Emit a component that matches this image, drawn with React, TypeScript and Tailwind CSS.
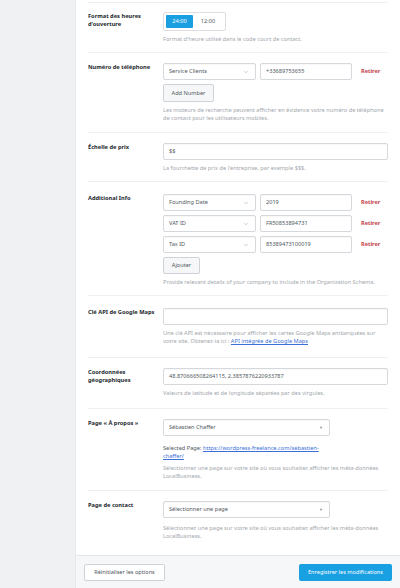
import { ChevronDown } from 'lucide-react';

const font = "font-['Noto_Sans',sans-serif]";
const labelCls = 'w-[75px] shrink-0 text-[5.7px] font-bold leading-[8px] text-[#23282d]';
const helpCls = 'text-[5.65px] leading-[8px] text-[#a2a7ad]';
const inputCls =
  'h-[17px] border border-[#d5d8dc] rounded-[2px] bg-white px-[5px] flex items-center text-[5.6px] text-[#50575e] whitespace-nowrap shadow-[inset_0_1px_1px_rgba(0,0,0,0.03)]';
const btnCls =
  'border border-[#cfd3d7] rounded-[2px] bg-[#f6f7f8] flex items-center justify-center text-[5.6px] text-[#50575e] whitespace-nowrap';

function Select({ value, width }: { value: string; width: string }) {
  return (
    <div className={`${inputCls} ${width} justify-between`}>
      <span>{value}</span>
      <ChevronDown size={6} strokeWidth={2} className="text-[#9aa0a6] mr-[1px]" />
    </div>
  );
}

function PageSelect({ value }: { value: string }) {
  return (
    <div className={`${inputCls} w-[167px] justify-between text-[#3c434a]`}>
      <span>{value}</span>
      <span className="text-[4px] text-[#8c9196] mr-[1px]">▼</span>
    </div>
  );
}

function Row({ label, children, pt = 'pt-[10px]', pb = 'pb-[10px]' }: { label: React.ReactNode; children: React.ReactNode; pt?: string; pb?: string }) {
  return (
    <div className={`flex border-t border-[#eef0f2] ${pt} ${pb}`}>
      <div className={labelCls}>{label}</div>
      <div className="flex-1 flex flex-col">{children}</div>
    </div>
  );
}

function PairRow({ kind, value }: { kind: string; value: string }) {
  return (
    <div className="flex items-center">
      <Select value={kind} width="w-[93px]" />
      <div className={`${inputCls} w-[92px] ml-[4px]`}>{value}</div>
      <span className="ml-[9px] text-[5.6px] font-bold text-[#c4434a]">Retirer</span>
    </div>
  );
}

export default function App() {
  return (
    <div className={`${font} flex w-[400px] h-[588px] overflow-hidden bg-[#f0f1f3]`}>
      <div className="w-[75px] shrink-0 bg-[#f0f1f3]" />
      <div className="flex-1 flex flex-col bg-white border-l border-[#e6e8eb]">
        <div className="flex-1 px-[12px] pt-[2px]">
          <Row label={<>Format des heures<br />d'ouverture</>} pt="pt-[9px]" pb="pb-[9px]">
            <div className="flex w-[63px] h-[19px] border border-[#dcdfe3] rounded-[2px] p-[2px] items-stretch">
              <div className="w-[27px] bg-[#1a9fe0] rounded-[1px] text-white text-[5.6px] flex items-center justify-center">24:00</div>
              <div className="flex-1 text-[#50575e] text-[5.6px] flex items-center justify-center">12:00</div>
            </div>
            <p className={`${helpCls} mt-[4px]`}>Format d'heure utilisé dans le code court de contact.</p>
          </Row>

          <Row label="Numéro de téléphone">
            <PairRow kind="Service Clients" value="+33689753655" />
            <div className={`${btnCls} w-[51px] h-[18px] mt-[4px]`}>Add Number</div>
            <p className={`${helpCls} mt-[4px]`}>
              Les moteurs de recherche peuvent afficher en évidence votre numéro de téléphone de contact pour les utilisateurs mobiles.
            </p>
          </Row>

          <Row label="Échelle de prix" pb="pb-[9px]">
            <div className={inputCls}>$$</div>
            <p className={`${helpCls} mt-[4px]`}>La fourchette de prix de l'entreprise, par exemple $$$.</p>
          </Row>

          <Row label="Additional Info" pt="pt-[12px]" pb="pb-[9px]">
            <div className="flex flex-col gap-[4px]">
              <PairRow kind="Founding Date" value="2019" />
              <PairRow kind="VAT ID" value="FR50853894731" />
              <PairRow kind="Tax ID" value="85389473100019" />
            </div>
            <div className={`${btnCls} w-[37px] h-[17px] mt-[4px]`}>Ajouter</div>
            <p className={`${helpCls} mt-[4px]`}>Provide relevant details of your company to include in the Organization Schema.</p>
          </Row>

          <Row label="Clé API de Google Maps" pt="pt-[12px]" pb="pb-[12px]">
            <div className={inputCls} />
            <p className={`${helpCls} mt-[4px]`}>
              Une clé API est nécessaire pour afficher les cartes Google Maps embarquées sur
              <br />
              votre site. Obtenez-la ici :{' '}
              <a className="text-[#3b6fd6] underline">API intégrée de Google Maps</a>
            </p>
          </Row>

          <Row label={<>Coordonnées<br />géographiques</>} pb="pb-[11px]">
            <div className={inputCls}>48.870666508264115, 2.3857876220933787</div>
            <p className={`${helpCls} mt-[4px]`}>Valeurs de latitude et de longitude séparées par des virgules.</p>
          </Row>

          <Row label="Page « À propos »" pb="pb-[10px]">
            <PageSelect value="Sébastien Chaffer" />
            <p className="text-[5.65px] leading-[8px] text-[#50575e] mt-[8px]">
              Selected Page:{' '}
              <a className="text-[#3b6fd6] underline">
                https://wordpress-freelance.com/sebastien-
                <br />
                chaffer/
              </a>
            </p>
            <p className={`${helpCls} mt-[4px]`}>
              Sélectionnez une page sur votre site où vous souhaitez afficher les méta-données
              <br />
              LocalBusiness.
            </p>
          </Row>

          <Row label="Page de contact" pb="pb-[11px]">
            <PageSelect value="Sélectionner une page" />
            <p className={`${helpCls} mt-[6px]`}>
              Sélectionnez une page sur votre site où vous souhaitez afficher les méta-données
              <br />
              LocalBusiness.
            </p>
          </Row>
        </div>

        <div className="h-[33px] shrink-0 border-t border-[#e4e6e9] bg-[#f6f7f8] flex items-start justify-between pl-[8px] pr-[8px] pt-[8px]">
          <div className={`${btnCls} h-[17px] w-[81px] bg-white`}>Réinitialiser les options</div>
          <div className="h-[17px] w-[93px] rounded-[2px] bg-[#19a0e3] text-white text-[5.6px] flex items-center justify-center">
            Enregistrer les modifications
          </div>
        </div>
      </div>
    </div>
  );
}
